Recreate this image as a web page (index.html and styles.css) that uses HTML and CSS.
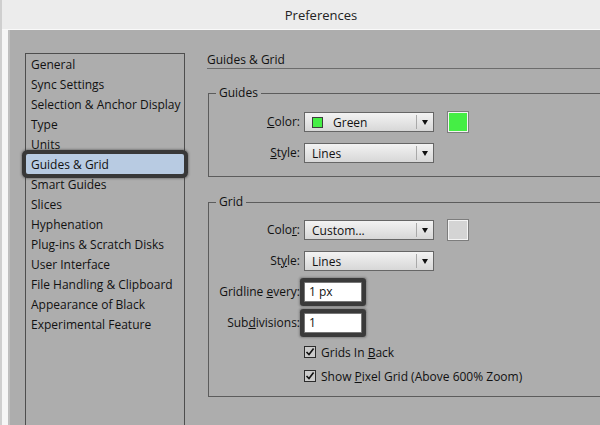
FILE: index.html
```html
<!DOCTYPE html>
<html>
<head>
    <title>Preferences</title>
    <link rel="stylesheet" href="styles.css">
</head>
<body>
    <div class="window">
        <div class="titlebar">Preferences</div>

        <div class="content">
            <ul class="categories">
                <li>General</li>
                <li>Sync Settings</li>
                <li>Selection &amp; Anchor Display</li>
                <li>Type</li>
                <li>Units</li>
                <li class="selected">Guides &amp; Grid</li>
                <li>Smart Guides</li>
                <li>Slices</li>
                <li>Hyphenation</li>
                <li>Plug-ins &amp; Scratch Disks</li>
                <li>User Interface</li>
                <li>File Handling &amp; Clipboard</li>
                <li>Appearance of Black</li>
                <li>Experimental Feature</li>
            </ul>

            <div class="panel">
                <div class="panel-title">Guides &amp; Grid</div>

                <fieldset class="group guides">
                    <legend>Guides</legend>
                    <div class="row">
                        <label><u>C</u>olor:</label>
                        <div class="select">
                            <span class="chip green"></span>
                            <span class="select-text with-chip">Green</span>
                            <span class="arrow"></span>
                        </div>
                        <span class="swatch green"></span>
                    </div>
                    <div class="row">
                        <label><u>S</u>tyle:</label>
                        <div class="select">
                            <span class="select-text">Lines</span>
                            <span class="arrow"></span>
                        </div>
                    </div>
                </fieldset>

                <fieldset class="group grid">
                    <legend>Grid</legend>
                    <div class="row">
                        <label>Colo<u>r</u>:</label>
                        <div class="select">
                            <span class="select-text">Custom...</span>
                            <span class="arrow"></span>
                        </div>
                        <span class="swatch light"></span>
                    </div>
                    <div class="row">
                        <label>St<u>y</u>le:</label>
                        <div class="select">
                            <span class="select-text">Lines</span>
                            <span class="arrow"></span>
                        </div>
                    </div>
                    <div class="row">
                        <label>Gridline <u>e</u>very:</label>
                        <div class="field">1 px</div>
                    </div>
                    <div class="row">
                        <label>Sub<u>d</u>ivisions:</label>
                        <div class="field">1</div>
                    </div>
                    <div class="check-row first">
                        <svg class="checkbox" width="12" height="12" viewBox="0 0 12 12">
                            <rect x="0.5" y="0.5" width="11" height="11" fill="#cbcbcb" stroke="#2b2b2b"/>
                            <path d="M2.5 6 L5 8.6 L9.6 2.6" fill="none" stroke="#111" stroke-width="1.6"/>
                        </svg>
                        <span>Grids In <u>B</u>ack</span>
                    </div>
                    <div class="check-row">
                        <svg class="checkbox" width="12" height="12" viewBox="0 0 12 12">
                            <rect x="0.5" y="0.5" width="11" height="11" fill="#cbcbcb" stroke="#2b2b2b"/>
                            <path d="M2.5 6 L5 8.6 L9.6 2.6" fill="none" stroke="#111" stroke-width="1.6"/>
                        </svg>
                        <span>Show <u>P</u>ixel Grid (Above 600% Zoom)</span>
                    </div>
                </fieldset>
            </div>
        </div>
    </div>
</body>
</html>
```

FILE: styles.css
```css
body { margin: 0; background: #f6f6f6; font-family: "Open Sans", "Liberation Sans", sans-serif; font-size: 12px; color: #111; overflow: hidden; }
.window { height: 425px; border-left: 2px solid #cfcfcf; display: flex; flex-direction: column; }
.titlebar { height: 29px; line-height: 30px; background: #ececec; border-bottom: 1px solid #f9f9f9; text-align: center; padding-left: 40px; font-size: 13px; color: #222; }

.content { flex: 1; margin-left: 6px; border-left: 2px solid #bfbfbf; background: #adadad; display: flex; padding: 23px 0 0 15px; overflow: hidden; }

.categories { list-style: none; margin: 0 22px -1px 0; padding: 0; width: 160px; box-sizing: border-box; border: 1px solid #4e4e4e; flex-shrink: 0; }
.categories li { height: 20px; line-height: 21px; padding-left: 5px; white-space: nowrap; }
.categories .selected { position: relative; background: #b8cbe2; box-shadow: 0 0 0 4px #383838, 0 0 2px 5px rgba(40, 40, 40, 0.35); border-radius: 2px; }

.panel { flex: 1; margin-right: -40px; }
.panel-title { line-height: 14px; padding-bottom: 1px; border-bottom: 1px solid #6c6c6c; }

.group { margin: 17px 0 0 1px; padding: 12px 0 13px 0; border: 1px solid #5c5c5c; }
.group.grid { margin-top: 18px; padding-top: 11px; padding-bottom: 8px; }
.group legend { margin-left: 7px; padding: 0 3px; line-height: 14px; }

.row { display: flex; align-items: center; height: 20px; margin-top: 11px; }
.row:first-of-type { margin-top: 0; }
.row label { width: 91px; margin-right: 4px; text-align: right; white-space: nowrap; line-height: 18px; }

.select { width: 130px; height: 20px; box-sizing: border-box; border: 1px solid #666; background: linear-gradient(#f3f3f3, #d7d7d7); display: flex; align-items: center; line-height: 17px; }
.select-text { flex: 1; padding-left: 7px; }
.select-text.with-chip { padding-left: 10px; }
.chip { width: 11px; height: 11px; margin-left: 7px; box-sizing: border-box; border: 1px solid #3d3d3d; }
.arrow { width: 16px; height: 14px; border-left: 1px solid #a9a9a9; position: relative; }
.arrow::after { content: ""; position: absolute; left: 5px; top: 5px; border-left: 3.5px solid transparent; border-right: 3.5px solid transparent; border-top: 5px solid #111; }

.green { background: #45ee45; }
.light { background: #d4d4d4; }
.swatch { width: 20px; height: 20px; margin-left: 14px; box-sizing: border-box; border: 1px solid #f4f4f4; box-shadow: 0 0 0 1px #7d7d7d; }

.field { width: 58px; height: 20px; box-sizing: border-box; background: #fff; border: 1px solid #777; border-radius: 1px; padding-left: 4px; line-height: 17px; box-shadow: 0 0 0 4px #3a3a3a, 0 0 2px 5px rgba(40, 40, 40, 0.3); }

.check-row { display: flex; align-items: center; height: 24px; padding-left: 95px; line-height: 17px; }
.check-row.first { margin-top: 7px; }
.checkbox { margin-right: 5px; }
```
